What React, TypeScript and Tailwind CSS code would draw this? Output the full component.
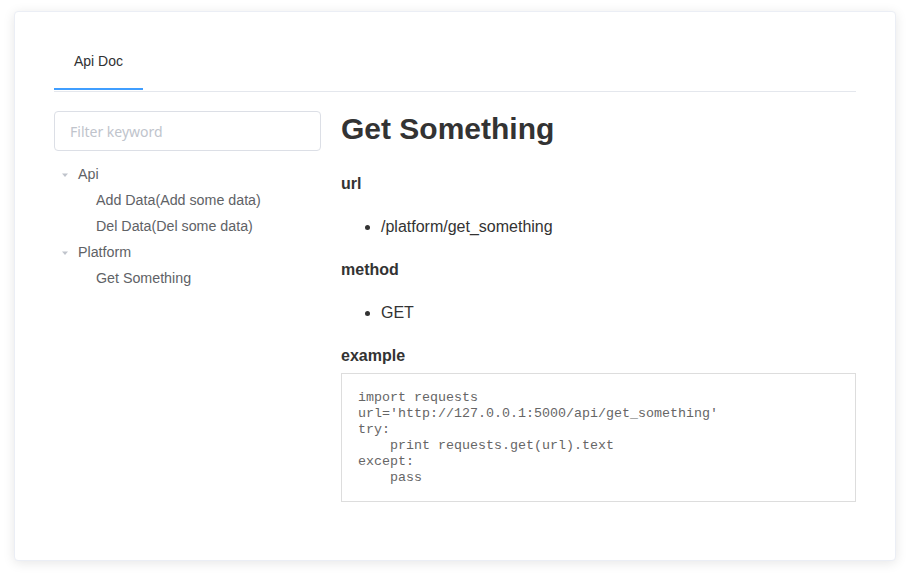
import React from "react";

const Caret = () => (
  <svg width="12" height="12" viewBox="0 0 12 12" className="shrink-0">
    <path d="M3 4.5 L9 4.5 L6 8 Z" fill="#c0c4cc" />
  </svg>
);

export default function App() {
  const code = `import requests
url='http://127.0.0.1:5000/api/get_something'
try:
    print requests.get(url).text
except:
    pass`;
  return (
    <div className="min-h-[573px] bg-white pt-[11px] pl-[14px] pr-[14px] pb-[12px]" style={{ fontFamily: '"Liberation Sans", Arial, sans-serif' }}>
      <div className="h-[550px] rounded bg-white border border-[#ebeef5] shadow-[0_2px_12px_0_rgba(0,0,0,0.1)] px-[39px] pt-[29px]">
        {/* tabs */}
        <div className="flex border-b border-[#e4e7ed] h-[51px] items-end">
          <div className="relative px-5 h-[51px] pt-[1px] text-[14px] leading-[40px] text-[#303133]">
            Api Doc
            <div className="absolute left-0 right-0 bottom-[1px] h-[2px] bg-[#409eff]" />
          </div>
        </div>
        <div className="grid grid-cols-[267px_1fr] gap-5 mt-[19px]">
          {/* left */}
          <div>
            <div className="h-10 rounded border border-[#dcdfe6] flex items-center px-[15px]">
              <span className="text-[14px] text-[#c0c4cc]" style={{ fontFamily: '"Noto Sans", sans-serif' }}>Filter keyword</span>
            </div>
            <div className="mt-[11px] text-[14.25px] text-[#606266]">
              <div className="h-[26px] flex items-center pl-[5px] gap-[7px]"><Caret /><span>Api</span></div>
              <div className="h-[26px] flex items-center pl-[42px]">Add Data(Add some data)</div>
              <div className="h-[26px] flex items-center pl-[42px]">Del Data(Del some data)</div>
              <div className="h-[26px] flex items-center pl-[5px] gap-[7px]"><Caret /><span>Platform</span></div>
              <div className="h-[26px] flex items-center pl-[42px]">Get Something</div>
            </div>
          </div>
          {/* right */}
          <div className="text-[#333] pt-[1px]">
            <h1 className="text-[30px] leading-[34px] font-bold">Get Something</h1>
            <h4 className="mt-[28px] text-[16px] leading-[20px] font-bold">url</h4>
            <ul className="mt-[23px] list-disc pl-10 text-[16px] leading-[20px]">
              <li>/platform/get_something</li>
            </ul>
            <h4 className="mt-[23px] text-[16px] leading-[20px] font-bold">method</h4>
            <ul className="mt-[23px] list-disc pl-10 text-[16px] leading-[20px]">
              <li>GET</li>
            </ul>
            <h4 className="mt-[23px] text-[16px] leading-[20px] font-bold">example</h4>
            <pre
              className="mt-[7px] border border-[#ddd] pt-[16px] pb-[15px] px-4 text-[13.33px] leading-[16px] text-[#666] whitespace-pre"
              style={{ fontFamily: '"Liberation Mono", "Courier New", monospace' }}
            >
              {code}
            </pre>
          </div>
        </div>
      </div>
    </div>
  );
}
